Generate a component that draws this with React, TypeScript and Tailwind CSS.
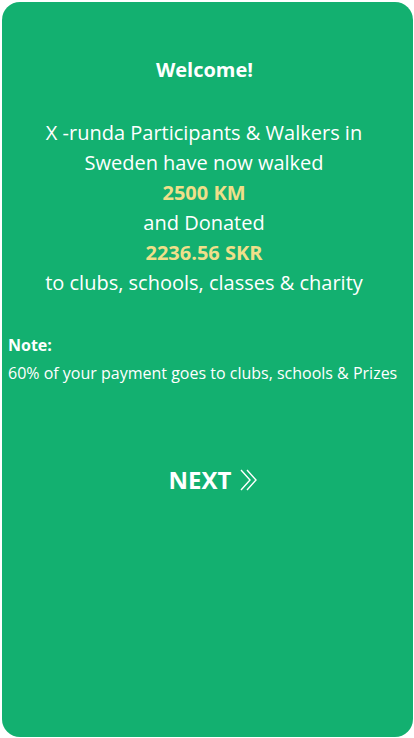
export default function App() {
  return (
    <div className="w-[414px] h-[738px] bg-white pt-[2px] pl-[2px] pr-[1px] pb-[1px] font-['Open_Sans',sans-serif]">
      <div className="h-full rounded-[18px] bg-[#13b070] text-white flex flex-col">
        <h1 className="mt-[55px] pr-[6px] text-center text-[20px] font-bold leading-[26px]">Welcome!</h1>
        <div className="mt-[35px] pr-[7px] text-center text-[20px] leading-[30px]">
          <p>X -runda Participants &amp; Walkers in</p>
          <p>Sweden have now walked</p>
          <p className="font-bold text-[#efdf8a]">2500 KM</p>
          <p>and Donated</p>
          <p className="font-bold text-[#efdf8a]">2236.56 SKR</p>
          <p>to clubs, schools, classes &amp; charity</p>
        </div>
        <div className="mt-[33px] px-[6px] text-[16px] leading-[28px]">
          <p className="font-bold">Note:</p>
          <p>60% of your payment goes to clubs, schools &amp; Prizes</p>
        </div>
        <button className="mt-[78px] ml-[12px] self-center flex items-center gap-[8px] text-[24px] font-bold leading-[30px]">
          NEXT
          <svg width="19" height="22" viewBox="0 0 19 22" fill="none" stroke="white" strokeWidth="1.4">
            <path d="M2 1l9 10-9 10" />
            <path d="M8 1l9 10-9 10" />
          </svg>
        </button>
      </div>
    </div>
  )
}
